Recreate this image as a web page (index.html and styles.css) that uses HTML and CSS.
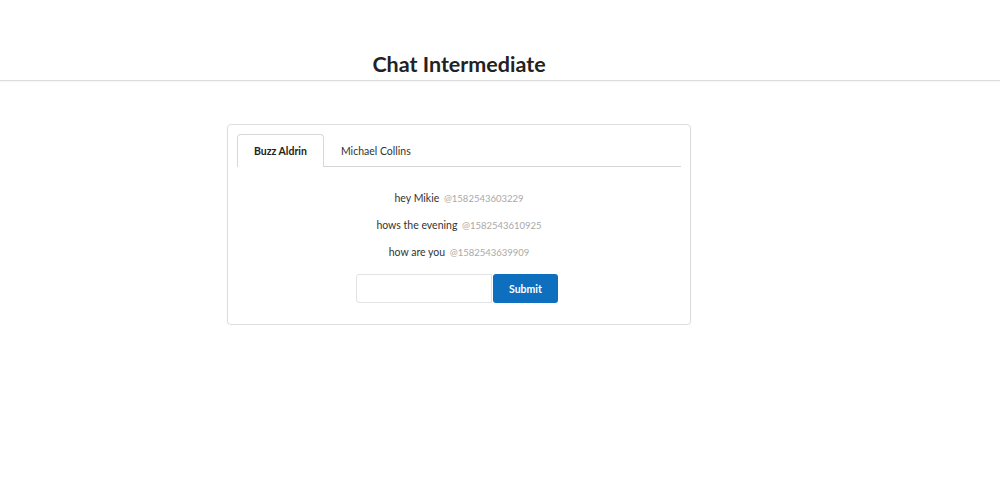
FILE: index.html
```html
<!DOCTYPE html>
<html>
<head>
<meta charset="utf-8">
<link rel="stylesheet" href="styles.css">
</head>
<body>
<header class="topbar">
  <div class="wrap"><h1 class="title">Chat Intermediate</h1></div>
</header>
<main class="wrap">
  <section class="card">
    <nav class="tabs">
      <div class="tab active">Buzz Aldrin</div>
      <div class="tab">Michael Collins</div>
    </nav>
    <ul class="messages">
      <li class="msg">hey Mikie <span class="stamp">@1582543603229</span></li>
      <li class="msg">hows the evening <span class="stamp">@1582543610925</span></li>
      <li class="msg">how are you <span class="stamp">@1582543639909</span></li>
    </ul>
    <form class="composer">
      <input class="field" type="text">
      <button class="submit" type="button">Submit</button>
    </form>
  </section>
</main>
</body>
</html>
```

FILE: styles.css
```css
html, body {
  margin: 0;
  padding: 0;
  background: #fff;
  font-family: Lato, "Noto Sans", sans-serif;
  color: #333;
}
.wrap {
  width: 464px;
  margin-left: 227px;
}
.topbar {
  padding-top: 51px;
  padding-bottom: 3px;
  border-bottom: 1px solid #dcdcdc;
  box-shadow: 0 1px 1px rgba(0,0,0,0.03);
}
.title {
  margin: 0;
  font-size: 21.5px;
  line-height: 26px;
  font-weight: 700;
  text-align: center;
  color: #222;
}
.card {
  margin-top: 43px;
  box-sizing: border-box;
  height: 201px;
  border: 1px solid #dedede;
  border-radius: 4px;
  box-shadow: 0 1px 2px rgba(0,0,0,0.06);
  padding: 9px 9px 21px 9px;
}
.tabs {
  display: flex;
  border-bottom: 1px solid #d4d4d4;
  height: 32px;
}
.tab {
  box-sizing: border-box;
  height: 33px;
  padding: 0 16px;
  font-size: 10.5px;
  line-height: 32px;
  white-space: nowrap;
  color: #333;
  border: 1px solid transparent;
  border-bottom: none;
}
.tab.active {
  font-weight: 700;
  color: #222;
  background: #fff;
  border-color: #d8d8d8;
  border-radius: 4px 4px 0 0;
}
.messages {
  list-style: none;
  margin: 18px 0 0 0;
  padding: 0;
}
.msg {
  height: 27px;
  text-align: center;
  font-size: 10.5px;
  line-height: 26px;
  color: #333;
}
.stamp {
  margin-left: 2px;
  font-size: 9.5px;
  line-height: 1;
  color: #a9a9a9;
}
.composer {
  display: flex;
  justify-content: center;
  margin: 8px 0 0 0;
  padding-right: 4px;
}
.field {
  box-sizing: border-box;
  width: 136px;
  height: 29px;
  margin: 0;
  border: 1px solid #e3e3e3;
  border-radius: 3px 0 0 3px;
  padding: 0 6px;
  font-family: inherit;
  font-size: 11px;
  outline: none;
}
.submit {
  box-sizing: border-box;
  width: 65px;
  height: 29px;
  margin: 0 0 0 1px;
  border: none;
  border-radius: 3px;
  background: #0d6fbe;
  color: #fff;
  font-family: inherit;
  font-weight: 700;
  font-size: 10.5px;
}
```
